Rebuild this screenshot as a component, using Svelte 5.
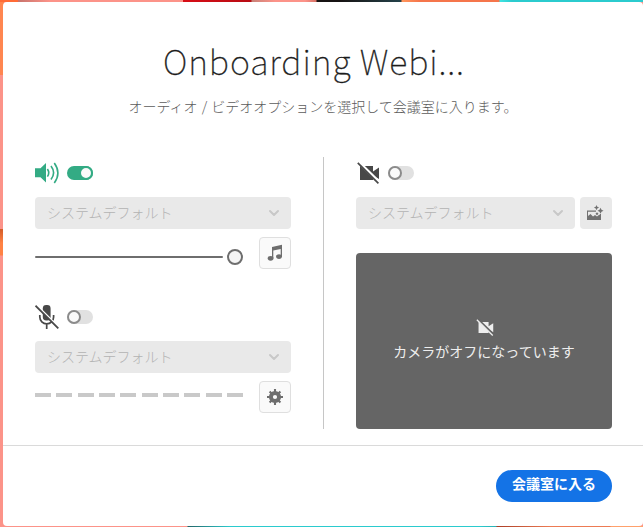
<script>
  const bars = Array.from({ length: 10 }, (_, i) => i);
</script>

{#snippet picker()}
  <button class="picker" disabled>
    <span>システムデフォルト</span>
    <svg width="12" height="8" viewBox="0 0 12 8"><path d="M2 2l4 4 4-4" fill="none" stroke="#c8c8c8" stroke-width="2" stroke-linecap="round" stroke-linejoin="round" /></svg>
  </button>
{/snippet}

{#snippet cameraOff(w, h)}
  <svg width={w} height={h} viewBox="0 0 24 22">
    <path d="M3 4h13v5.5l6-4V17l-6-3v4H3z" fill="currentColor" />
    <path d="M2 .5L23 21" stroke="var(--gap)" stroke-width="3.2" />
    <path d="M.8 .9L21.4 21.3" stroke="currentColor" stroke-width="1.7" />
  </svg>
{/snippet}

<div class="stage">
  <section class="dialog">
    <header>
      <h1>Onboarding Webi...</h1>
      <p>オーディオ / ビデオオプションを選択して会議室に入ります。</p>
    </header>

    <main>
      <div class="column audio">
        <div class="row heading">
          <svg width="24" height="22" viewBox="0 0 24 22">
            <path d="M0 6.3h5.5L11 1v19.5l-5.5-5.3H0z" fill="#33ab84" />
            <path d="M12.4 7q2.7 3.8 0 7.6M16 4q5.2 6.8 0 13.6M19.3 1q7.2 10 0 20" fill="none" stroke="#33ab84" stroke-width="1.6" />
          </svg>
          <span class="switch on"></span>
        </div>
        {@render picker()}
        <div class="row controls">
          <div class="slider"><i class="track"></i><i class="thumb"></i></div>
          <button class="tool">
            <svg width="16" height="18" viewBox="0 0 16 18">
              <path d="M5 14V3l10-2.2V13h-1.3V5L6.3 6.6V14z" fill="#6e6e6e" />
              <ellipse cx="3.6" cy="14.3" rx="2.9" ry="2.4" fill="#6e6e6e" />
              <ellipse cx="12" cy="12.6" rx="2.9" ry="2.4" fill="#6e6e6e" />
            </svg>
          </button>
        </div>
        <div class="row heading mic">
          <svg width="24" height="24" viewBox="0 0 24 24">
            <rect x="7.8" y="0" width="7.8" height="15.5" rx="3.4" fill="#484848" />
            <path d="M4.8 10v2a6.9 6.9 0 0 0 13.8 0v-2M11.7 19v5" fill="none" stroke="#484848" stroke-width="1.7" />
            <path d="M1.8 .2L24 22.4" stroke="#fff" stroke-width="1.8" />
            <path d="M.5 .7L23.3 23.3" stroke="#484848" stroke-width="1.8" />
          </svg>
          <span class="switch"></span>
        </div>
        {@render picker()}
        <div class="row controls">
          <div class="level">{#each bars as bar (bar)}<i></i>{/each}</div>
          <button class="tool">
            <svg width="16" height="16" viewBox="0 0 16 16">
              <circle cx="8" cy="8" r="4.1" fill="none" stroke="#6e6e6e" stroke-width="4" />
              <path d="M8 0v3M8 13v3M0 8h3M13 8h3M2.6 2.6l2 2M11.4 11.4l2 2M2.6 13.4l2-2M11.4 4.6l2-2" stroke="#6e6e6e" stroke-width="2.1" />
            </svg>
          </button>
        </div>
      </div>

      <div class="divider"></div>

      <div class="column video">
        <div class="row heading">
          {@render cameraOff(24, 22)}
          <span class="switch"></span>
        </div>
        <div class="row sources">
          {@render picker()}
          <button class="tool flat" disabled>
            <svg width="18" height="17" viewBox="0 0 18 17">
              <path d="M1 5.5h9v1.2H2V11l2.5-2L7 11.5l2-1.5 2 1.5 2.5-2 .5.5V9h1v6H1z" fill="#717171" />
              <path d="M10.5 0l.8 1.8 1.8.8-1.8.8-.8 1.8-.8-1.8-1.8-.8 1.8-.8zM14.5 2.8l1 2 2 1-2 1-1 2-1-2-2-1 2-1zM11 7.2l1.5 1.5-1.5 1.5-1.5-1.5z" fill="#717171" />
            </svg>
          </button>
        </div>
        <div class="preview">
          {@render cameraOff(19, 17)}
          <span>カメラがオフになっています</span>
        </div>
      </div>
    </main>

    <footer><button class="enter">会議室に入る</button></footer>
  </section>
</div>

<style>
  .stage {
    box-sizing: border-box;
    width: 643px;
    height: 527px;
    padding: 2px 0 1px 3px;
    overflow: hidden;
    font-family: "Noto Sans CJK JP", sans-serif;
    background:
      linear-gradient(90deg, #ff6b36 0 18px, #c8736c 18px, #fc9389 50px 183px, #d70d16 183px, #b80c13 251px, #c98178 252px, #fc9389 275px 305px, #d87165 316px, #171313 317px 340px, #24424a 401px, #ff965c 402px, #f5754b 420px 499px, #3ee4e2 500px, #2bcbce 512px) 0 0 / 643px 2px no-repeat,
      linear-gradient(90deg, #fc9389 0 187px, #236568 188px, #2bcbce 230px 480px, #2aaeb2 496px, #aa3d26 497px, #ed7b53 550px 610px, #ffa16c 611px) 0 100% / 643px 1px no-repeat,
      linear-gradient(#ff8650 0 75px, #fc9389 75px 229px, #d35c28 229px, #ff8244 243px 255px, #fc9389 256px) 0 0 / 4px 527px no-repeat,
      #fc9389;
  }
  .dialog {
    display: flex;
    flex-direction: column;
    width: 640px;
    height: 524px;
    border-radius: 4px;
    background: #fff;
  }
  header {
    display: flex;
    flex-direction: column;
    align-items: center;
    height: 155px;
  }
  h1 {
    width: 320px;
    margin: 37px 0 0;
    font-size: 34px;
    line-height: 44px;
    font-weight: 100;
    letter-spacing: 0.92px;
    color: #1c1c1c;
    -webkit-text-stroke: 0.3px #1c1c1c;
    white-space: nowrap;
  }
  p {
    margin: 13px 0 0;
    font-size: 14px;
    line-height: 21px;
    font-weight: 300;
    word-spacing: 1px;
    color: #5c5c5c;
    white-space: nowrap;
  }
  main {
    display: flex;
    height: 272px;
    padding: 0 31px 0 32px;
  }
  .column { width: 256px; }
  .row { display: flex; }
  .divider {
    width: 1px;
    margin: 0 32px;
    background: #c6c6c6;
  }
  .heading {
    align-items: center;
    height: 32px;
    margin-bottom: 8px;
    gap: 8px;
    color: #484848;
    --gap: #fff;
  }
  .mic { margin-top: 32px; }
  .video .heading { margin-left: 1px; gap: 7px; }
  button {
    box-sizing: border-box;
    margin: 0;
    font-family: inherit;
  }
  .picker {
    display: flex;
    align-items: center;
    justify-content: space-between;
    width: 100%;
    height: 32px;
    padding: 0 11px 0 12px;
    border: 0;
    border-radius: 4px;
    background: #e9e9e9;
    color: #b3b3b3;
    font-size: 14px;
    font-weight: 300;
    line-height: 20px;
  }
  .picker span { padding-bottom: 2px; }
  .switch {
    box-sizing: border-box;
    display: flex;
    width: 26px;
    height: 14px;
    border-radius: 7px;
    background: #e1e1e1;
  }
  .switch::before {
    content: "";
    box-sizing: border-box;
    width: 14px;
    height: 14px;
    border: 2px solid #8b8b8b;
    border-radius: 50%;
    background: #fafafa;
  }
  .switch.on { justify-content: flex-end; background: #33ab84; }
  .switch.on::before { border-color: #33ab84; }
  .controls {
    justify-content: space-between;
    height: 32px;
    margin-top: 8px;
  }
  .slider {
    display: flex;
    align-items: center;
    width: 208px;
    height: 40px;
    gap: 4px;
  }
  .track {
    flex: 1;
    height: 2px;
    border-radius: 1px;
    background: #6e6e6e;
  }
  .thumb {
    box-sizing: border-box;
    width: 16px;
    height: 16px;
    border: 2px solid #6e6e6e;
    border-radius: 50%;
    background: #f5f5f5;
  }
  .tool {
    display: flex;
    align-items: center;
    justify-content: center;
    width: 32px;
    height: 32px;
    padding: 0;
    border: 1px solid #dfdfdf;
    border-radius: 4px;
    background: #fafafa;
  }
  .flat { padding: 0 2px 0 0; border: 0; background: #e9e9e9; }
  .tool svg { flex: none; }
  .level {
    display: flex;
    justify-content: space-between;
    width: 208px;
    height: 4px;
    margin-top: 12px;
  }
  .level i { width: 16px; background: #c9c9c9; }
  .sources { gap: 5px; }
  .sources .picker { width: 219px; }
  .preview {
    display: flex;
    flex-direction: column;
    align-items: center;
    height: 110px;
    margin-top: 24px;
    padding-top: 66px;
    border-radius: 4px;
    background: #656565;
    color: #eee;
    font-size: 14px;
    line-height: 20px;
    --gap: #656565;
  }
  .preview svg { margin-left: 2px; }
  .preview span { margin-top: 5px; }
  footer {
    box-sizing: border-box;
    display: flex;
    justify-content: flex-end;
    height: 81px;
    margin-top: 16px;
    padding: 24px 31px 0 0;
    border-top: 1px solid #dadada;
  }
  .enter {
    width: 116px;
    height: 32px;
    padding: 0 0 6px;
    border: 0;
    border-radius: 16px;
    background: #1473e6;
    color: #fff;
    font-size: 14px;
    font-weight: 700;
    line-height: 20px;
  }
</style>
